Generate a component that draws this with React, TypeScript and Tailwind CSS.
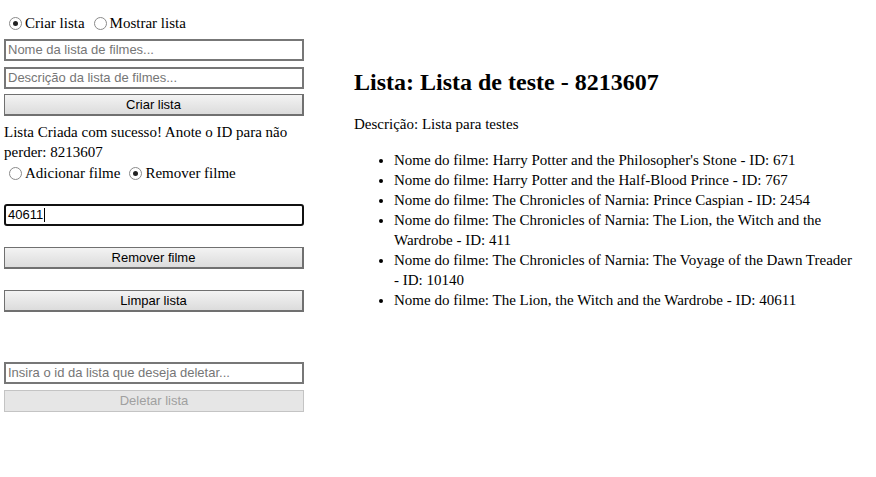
import React from "react";

const filmes = [
  { nome: "Harry Potter and the Philosopher's Stone", id: 671 },
  { nome: "Harry Potter and the Half-Blood Prince", id: 767 },
  { nome: "The Chronicles of Narnia: Prince Caspian", id: 2454 },
  { nome: "The Chronicles of Narnia: The Lion, the Witch and the Wardrobe", id: 411 },
  { nome: "The Chronicles of Narnia: The Voyage of the Dawn Treader", id: 10140 },
  { nome: "The Lion, the Witch and the Wardrobe", id: 40611 },
];

const serif = "font-['Liberation_Serif','Times_New_Roman',serif]";
const sans = "font-['Liberation_Sans',Arial,sans-serif]";

function Radio({ checked, label }: { checked?: boolean; label: string }) {
  return (
    <label className="flex items-center">
      <span className="ml-[5px] mr-[3px] flex h-[13px] w-[13px] items-center justify-center rounded-full border border-[#8a8a8a] bg-white">
        {checked && <span className="h-[5px] w-[5px] rounded-full bg-[#222]" />}
      </span>
      <span>{label}</span>
    </label>
  );
}

function TextInput({ placeholder }: { placeholder: string }) {
  return (
    <div
      className={`flex h-[22px] w-[300px] items-center border-2 border-[#777] bg-white px-[2px] text-[13px] text-[#767676] ${sans}`}
    >
      {placeholder}
    </div>
  );
}

function Button({ children, disabled }: { children: React.ReactNode; disabled?: boolean }) {
  return (
    <div
      className={
        disabled
          ? `flex h-[22px] w-[300px] items-center justify-center border border-[#c4c4c4] bg-[#e6e6e6] text-[13px] text-[#a0a0a0] ${sans}`
          : `flex h-[22px] w-[300px] items-center justify-center border border-[#707070] border-r-2 border-b-2 bg-gradient-to-b from-[#f3f3f3] to-[#dcdcdc] text-[13px] text-black ${sans}`
      }
    >
      {children}
    </div>
  );
}

export default function App() {
  return (
    <div className={`flex h-[477px] w-[876px] bg-white text-[15px] leading-[20px] text-black ${serif}`}>
      {/* Left column */}
      <div className="ml-[4px] flex w-[300px] flex-col pt-[12px]">
        <div className="flex gap-[4px] pt-px">
          <Radio checked label="Criar lista" />
          <Radio label="Mostrar lista" />
        </div>
        <div className="mt-[6px]">
          <TextInput placeholder="Nome da lista de filmes..." />
        </div>
        <div className="mt-[6px]">
          <TextInput placeholder="Descrição da lista de filmes..." />
        </div>
        <div className="mt-[5px]">
          <Button>Criar lista</Button>
        </div>
        <p className="mt-[6px]">Lista Criada com sucesso! Anote o ID para não perder: 8213607</p>
        <div className="flex gap-[4px] pt-px">
          <Radio label="Adicionar filme" />
          <Radio checked label="Remover filme" />
        </div>
        <div
          className={`mt-[21px] flex h-[22px] w-[300px] items-center rounded-[3px] border-2 border-[#111] bg-white px-[2px] text-[13px] ${sans}`}
        >
          40611<span className="ml-px h-[14px] w-px bg-black" />
        </div>
        <div className="mt-[21px]">
          <Button>Remover filme</Button>
        </div>
        <div className="mt-[21px]">
          <Button>Limpar lista</Button>
        </div>
        <div className="mt-[50px]">
          <TextInput placeholder="Insira o id da lista que deseja deletar..." />
        </div>
        <div className="mt-[6px]">
          <Button disabled>Deletar lista</Button>
        </div>
      </div>

      {/* Right column */}
      <div className="ml-[50px] w-[500px] pt-[68px]">
        <h2 className="text-[24px] font-bold leading-[28px]">Lista: Lista de teste - 8213607</h2>
        <p className="mt-[18px]">Descrição: Lista para testes</p>
        <ul className="mt-[16px] list-disc pl-[40px]">
          {filmes.map((f) => (
            <li key={f.id}>
              Nome do filme: {f.nome} - ID: {f.id}
            </li>
          ))}
        </ul>
      </div>
    </div>
  );
}
